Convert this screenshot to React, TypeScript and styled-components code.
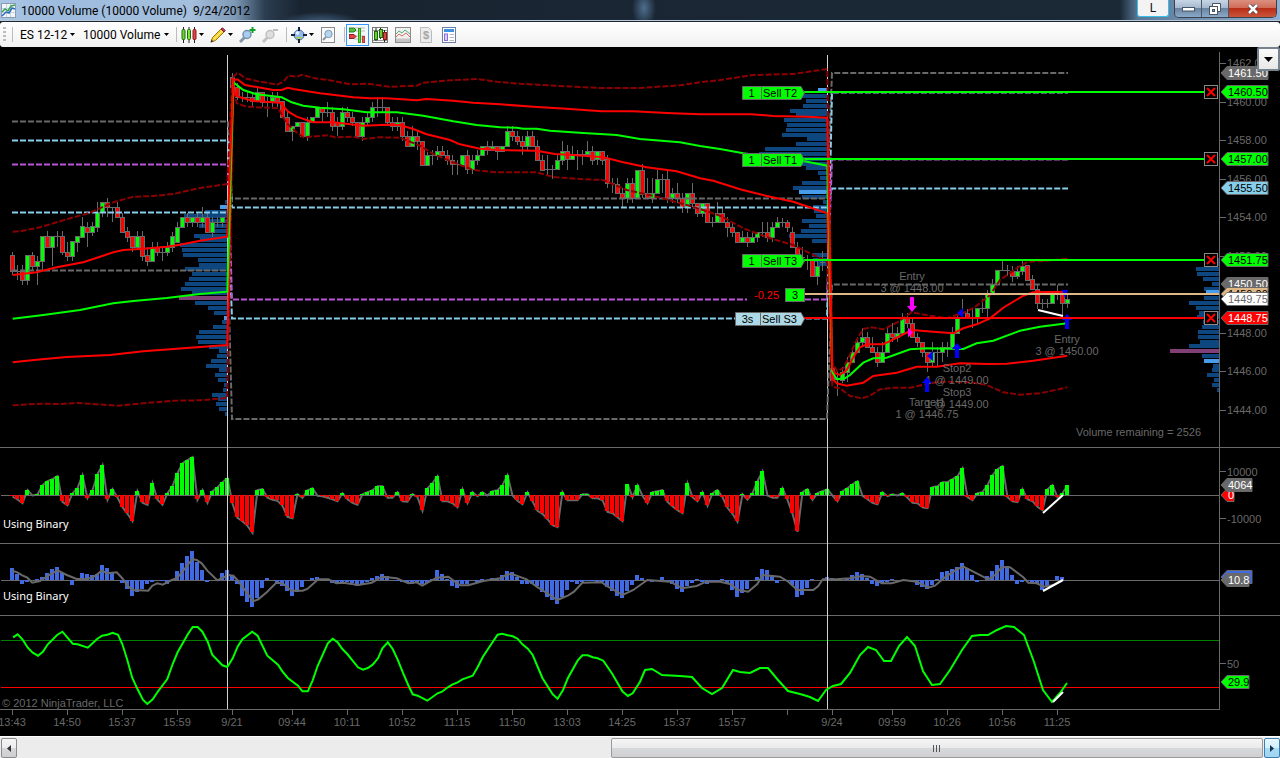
import React from "react";
import styled, { createGlobalStyle } from "styled-components";

const GlobalStyle = createGlobalStyle`
  html, body, #root { margin: 0; padding: 0; }
  body { background: #000; overflow-x: hidden; }
  * { box-sizing: border-box; }
`;

const uiFont = `Roboto, "Noto Sans", sans-serif`;
const captionFont = `"Noto Sans", "Open Sans", sans-serif`;
const chartFont = `"Liberation Sans", Arial, sans-serif`;

const gray = "#696969";
const lime = "#00ff00";
const red = "#ff0000";
const sky = "#87ceeb";
const orchid = "#ba55d3";
const tan = "#deb887";
const darkRed = "#8b0000";
const royal = "#4169e1";

/* ---------- window frame ---------- */

const Window = styled.div`
  display: flex;
  flex-direction: column;
  min-height: 100vh;
  background: #000;
`;

const TitleBar = styled.header`
  display: flex;
  align-items: flex-start;
  height: 22px;
  padding-left: 1px;
  border-bottom: 1px solid #1d2733;
  box-shadow: inset 0 -1px 0 #b9c7d6;
  background:
    radial-gradient(ellipse 12px 20px at 644px 8px, #4d6d8c 0%, transparent 100%),
    radial-gradient(ellipse 40px 10px at 320px 22px, #40607e 0%, transparent 100%),
    linear-gradient(90deg, #a9c6e6 0, #9dbbdd 60px, #a4c0de 190px, #7d99b6 235px, #2b3d50 265px, transparent 300px),
    linear-gradient(90deg, #18222e 0, #1b2937 1120px, #5a7896 1138px, #8fb0d2 100%);
`;

const TitleIcon = styled.svg`
  margin-top: 3px;
  flex: none;
`;

const Title = styled.h1`
  flex: 1;
  margin: 0 0 0 5px;
  font: 400 12px/22px ${uiFont};
  color: #000;
  white-space: pre;
`;

const LinkButton = styled.button`
  width: 32px;
  height: 17px;
  margin-right: 5px;
  padding: 0;
  border: 1px solid #35bfe8;
  border-top: 0;
  border-radius: 0 0 3px 3px;
  background: #f3f3f3;
  color: #111;
  font: 400 12px/16px ${uiFont};
`;

const CaptionGroup = styled.div`
  display: flex;
  height: 18px;
  margin-right: 3px;
  border: 1px solid #39424e;
  border-top: 0;
  border-radius: 0 0 5px 5px;
  overflow: hidden;
`;

const CaptionButton = styled.button<{ $wide?: boolean; $danger?: boolean }>`
  display: flex;
  align-items: center;
  justify-content: center;
  width: ${(p) => (p.$wide ? 47 : 27)}px;
  padding: 0;
  border: 0;
  border-right: ${(p) => (p.$danger ? "0" : "1px solid #4c5866")};
  background: ${(p) =>
    p.$danger
      ? "linear-gradient(#dc9080 0, #cf6c58 45%, #ba2e18 50%, #c9553a 100%)"
      : "linear-gradient(#c8d6e6 0, #a5b9d0 45%, #6a84a3 50%, #8aa9c8 100%)"};
`;

/* ---------- toolbar ---------- */

const Toolbar = styled.div`
  display: flex;
  align-items: center;
  height: 25px;
  padding-left: 3px;
  border-radius: 3px;
  background: linear-gradient(#fff, #f1f1f1);
`;

const Grip = styled.span`
  width: 3px;
  height: 15px;
  margin-right: 2px;
  background: repeating-linear-gradient(#bdbdbd 0 2px, transparent 2px 4px);
`;

const Separator = styled.span`
  width: 1px;
  height: 15px;
  margin: 0 1px 0 4px;
  background: #bcbcbc;
`;

const Pickers = styled.div`
  display: flex;
  gap: 8px;
  padding: 0 3px 0 6px;
`;

const PickerLabel = styled.label<{ $width: number }>`
  display: flex;
  align-items: center;
  width: ${(p) => p.$width}px;
`;

const Picker = styled.select`
  flex: 1;
  min-width: 0;
  height: 20px;
  padding: 0;
  border: 0;
  appearance: none;
  background: transparent;
  color: #000;
  font: 400 12px/20px ${uiFont};
`;

const ToolButton = styled.button<{ $menu?: boolean; $active?: boolean }>`
  display: flex;
  align-items: center;
  justify-content: space-between;
  flex: none;
  width: ${(p) => (p.$menu ? 29 : 23)}px;
  height: 22px;
  border: ${(p) => (p.$active ? "1px solid #3399ff" : "0")};
  padding: 0 ${(p) => (p.$active ? 2 : 3)}px;
  background: ${(p) => (p.$active ? "#f3f9ff" : "transparent")};
`;

/* ---------- chart ---------- */

const ChartArea = styled.main`
  position: relative;
  flex: 1;
  background: #000;
`;

const Pane = styled.svg`
  display: block;
  width: 100%;
  height: auto;
  font-family: ${chartFont};
  font-size: 11px;
`;

const ChartMenuButton = styled.button`
  position: absolute;
  top: 0;
  right: 0;
  display: flex;
  align-items: center;
  justify-content: center;
  width: 23px;
  height: 24px;
  padding: 0;
  border: 2px solid #77828f;
  border-radius: 2px;
  background: linear-gradient(#fafafa, #e8e8e8);
`;

const CancelButton = styled.button`
  display: block;
  width: 14px;
  height: 14px;
  padding: 0;
  border: 1px solid #8a8a8a;
  background: #000;
  svg { display: block; }
`;

/* ---------- scroll bar ---------- */

const ScrollBar = styled.footer`
  display: flex;
  height: 22px;
  padding: 1px 0 0 1px;
  border-top: 1px solid #fff;
  background: #ececec;
`;

const ScrollButton = styled.button<{ $hot?: boolean }>`
  flex: none;
  display: flex;
  align-items: center;
  justify-content: center;
  width: 16px;
  height: 20px;
  padding: 0;
  border: 1px solid ${(p) => (p.$hot ? "#3c7fb1" : "#8c8c8c")};
  border-radius: 2px;
  background: ${(p) =>
    p.$hot
      ? "linear-gradient(#e8f6fd 0, #d3effc 48%, #a9dbf5 52%, #a0d4ef 100%)"
      : "linear-gradient(#f6f6f6 0, #ededed 48%, #d6d7d9 52%, #cfcfd2 100%)"};
`;

const ScrollTrack = styled.div`
  flex: 1;
  display: flex;
  justify-content: flex-end;
`;

const ScrollThumb = styled.div`
  display: flex;
  align-items: center;
  justify-content: center;
  width: 52.3%;
  height: 20px;
  margin-right: 1px;
  border: 1px solid #9a9a9a;
  border-radius: 2px;
  background: linear-gradient(#f5f5f5 0, #ebebeb 48%, #d7d8da 52%, #d0d0d3 100%);
`;

/* ---------- series data: vertical values in thirds of a pixel ---------- */

type Candle = { i: number; dir: string; top: number; bottom: number; high: number; low: number };
type Point = [number, number];

const parseCandles = (start: number, originY: number, text: string): Candle[] =>
  text.split("|").map((row, n) => {
    const [dir, ...rest] = row.trim().split(" ");
    const [top, bottom, high, low] = rest.map((v) => originY + Math.round(Number(v) / 3));
    return { i: start + n, dir, top, bottom, high, low };
  });

const candles: Candle[] = [
  ...parseCandles(0, 100, "R 465 512 455 525|D 512 512 495 540|R 512 540 495 555|G 465 540 465 555|R 465 497 455 512|G 482 497 468 555|G 408 482 408 512|R 408 440 393 440|G 408 440 408 497|D 408 408 393 440|R 408 455 393 465|R 455 467 425 482|G 423 467 423 482|G 408 425 408 455|G 378 410 350 410|R 380 395 365 440|G 378 395 365 408|G 337 380 307 395|G 307 337 307 352|R 307 322 293 352|D 322 322 322 367|R 322 352 307 352|R 352 395 338 395|R 393 410 380 425|R 408 440 408 455|G 408 440 393 440|R 408 467 393 482|R 465 482 440 497|G 440 482 425 482|R 440 455 425 467|D 455 455 440 482|G 440 455 425 467|G 408 440 395 455|G 380 425 365 425|G 352 380 352 380|R 352 367 338 380|G 352 367 352 380|R 352 367 340 380|G 352 367 322 382|R 352 395 340 395|G 367 395 352 410|D 367 367 352 382|G 352 367 352 382"),
  ...parseCandles(44, 55, "R 67 97 55 100|R 97 127 85 135|D 125 125 110 140|D 125 125 110 140|R 127 138 112 155|G 112 138 98 138|R 112 140 112 155|D 140 140 125 185|G 125 138 112 155|R 125 138 112 155|R 138 185 138 185|R 185 227 170 227|G 212 227 212 258|G 200 212 200 212|R 200 243 200 243|G 200 243 185 258|G 185 200 185 200|G 155 185 155 185|R 155 170 155 200|D 170 170 140 185|R 170 212 155 227|R 200 212 185 243|G 170 212 155 225|R 170 185 155 200|R 185 200 170 212|R 200 243 200 243|G 200 243 185 258|G 185 200 170 212|G 155 185 140 200|D 155 155 127 185|D 155 155 127 170|R 155 200 155 212|R 200 212 185 227|G 200 212 185 227|R 200 243 185 258|R 243 272 227 272|G 243 272 212 272|R 243 257 227 285|R 257 329 257 329|G 300 329 290 329|D 300 300 285 330|G 287 300 272 315|R 287 300 272 300|R 300 315 285 330|R 315 327 300 360|D 327 327 315 360|G 300 329 300 329|R 300 343 285 358|G 315 343 300 358|G 300 315 285 330|G 272 300 272 300|R 272 285 257 300|G 272 285 257 285|R 272 287 272 315|G 272 287 272 287|G 227 272 212 272|R 227 243 212 257|R 243 257 227 270"),
  ...parseCandles(102, 100, "R 122 137 107 165|G 107 137 92 150|R 107 137 92 137|R 137 180 120 180|R 180 210 165 210|D 208 208 165 225|D 208 208 195 237|G 180 208 165 208|G 152 180 122 195|R 152 178 135 210|G 165 178 137 180|D 163 163 150 210|D 163 163 150 195|G 152 163 122 163|R 152 180 137 195|G 152 178 152 195|R 152 180 152 195|R 178 250 165 265|D 250 250 235 280|R 252 280 235 280|R 280 295 265 322|G 250 295 235 308|R 250 293 235 308|G 210 293 210 293|R 210 282 193 295|R 280 293 235 293|G 280 293 235 308|G 237 280 210 280|D 237 237 222 280|R 237 295 208 308|G 280 293 265 308|R 280 293 250 308|R 293 322 280 338|G 280 322 280 338|R 280 308 250 322|R 308 338 308 352|G 308 338 308 352|R 308 367 308 367|D 367 367 350 380|G 338 367 307 367|R 338 367 322 367|R 367 380 350 410|R 380 395 367 410|R 395 425 395 425|G 410 425 393 425|R 410 425 395 440|G 410 425 395 425|G 395 410 395 425"),
  ...parseCandles(150, 60, "D 515 515 485 530|R 515 530 485 545|G 500 530 485 545|G 487 500 472 500|D 487 487 475 500|R 487 500 480 515|R 515 560 500 560|R 560 590 545 590|D 590 590 560 600|D 598 598 585 630|R 600 647 600 647|G 617 647 600 675|D 605 605 572 632"),
  ...parseCandles(164, 240, "R 385 420 360 420|D 418 418 395 468|G 395 420 380 430|G 365 395 350 425|G 337 365 322 370|G 307 337 292 337|G 292 307 265 320|R 292 322 275 322|R 322 337 292 337|R 337 365 322 380|G 337 365 307 365|G 278 337 265 337|R 278 292 250 307|G 278 292 262 307|G 235 278 220 278|R 235 250 220 265|R 250 292 237 292|R 292 307 280 322|R 307 337 307 350|R 337 365 337 395|G 337 365 307 378|D 337 337 320 380|G 322 337 307 365|D 322 322 307 350|G 278 322 262 322|G 235 278 222 278|D 235 235 178 235|R 220 235 207 235|D 235 235 205 265|G 205 235 205 250|D 205 205 178 220|G 163 205 150 235|G 132 163 117 163|G 90 132 90 132|D 90 90 62 92|D 90 90 75 107|R 92 107 77 125|G 92 107 77 117|G 77 92 62 105|R 75 120 75 120|R 118 148 105 148|R 148 190 135 207|D 190 190 178 207|D 190 190 178 205|G 163 190 163 190|D 163 163 135 180|R 163 190 150 225|G 178 190 165 205"),
];

const deltaValues = [-3,-12,-23,16,0,3,31,43,49,58,-19,-29,7,22,61,-8,16,64,91,-13,19,-6,-35,-55,-77,13,-22,-28,37,-13,-28,7,28,67,97,106,115,-13,16,-22,13,25,40,52,-25,-67,-77,-91,-112,16,19,-7,-13,-16,-31,-64,-68,4,-7,16,22,-1,-2,-7,-11,-17,7,-11,-22,-28,4,10,16,28,28,-7,-7,10,-17,-19,4,-5,-46,22,37,58,-17,-17,-23,-35,19,-23,10,-2,10,0,13,16,31,61,0,-16,-26,10,-17,-46,-55,-71,-89,-95,10,-14,-14,-14,4,4,-8,-8,-14,-49,-53,-65,-77,34,-5,31,-1,-23,10,13,16,-19,-32,-44,-53,37,-5,-17,10,-31,7,16,-5,-37,-55,-79,4,-13,7,43,73,0,-7,-7,22,-13,-55,-109,10,19,-13,7,13,19,0,-17,13,22,34,43,-1,-11,-22,-26,10,-2,4,0,7,-7,-22,-23,-35,-38,25,28,40,40,49,58,82,-5,-14,7,10,31,61,79,88,-5,-17,-20,19,-11,-17,-34,-44,19,31,-5,7,31];

const momentumValues = [37,19,-11,-5,-1,3,10,22,34,40,22,0,-14,-1,22,19,16,19,46,37,22,-1,-8,-26,-47,-35,-26,-11,-5,-1,-2,-11,1,28,52,73,88,55,31,-5,0,0,22,31,16,-11,-47,-65,-80,-53,-23,7,0,-11,-17,-32,-47,-37,-20,0,7,10,2,-1,-8,-11,-5,-5,-8,-17,-11,-5,7,13,19,13,0,-2,-5,-8,-11,-8,-11,-10,3,31,19,3,-17,-23,-11,-11,0,-5,4,-1,7,7,16,28,25,10,-11,-11,-11,-17,-35,-50,-59,-71,-50,-29,-5,-11,-5,-2,-2,-5,-5,-20,-32,-47,-53,-32,-14,16,7,0,-5,0,10,-2,-11,-26,-35,-17,-8,4,-5,-11,-5,-2,4,-11,-29,-50,-38,-26,0,10,34,31,16,-8,0,-2,-14,-50,-44,-23,4,0,1,10,7,0,-1,4,16,25,19,7,-11,-17,-8,-5,4,0,1,-2,-5,-14,-20,-26,-14,4,25,28,34,40,52,37,16,-5,0,13,28,46,61,43,16,-11,-5,-2,-5,-11,-29,-17,0,13,10];

const parsePoints = (x0: number, y0: number, text: string, sx = 3): Point[] =>
  text.split(" ").map((pair) => {
    const [x, y] = pair.split(",").map(Number);
    return [x0 + x / sx, y0 + y / 3];
  });

const toPath = (points: Point[]) =>
  points.map(([x, y], n) => `${n ? "L" : "M"}${x.toFixed(1)} ${y.toFixed(1)}`).join("");

const upperBand = toPath([
  ...parsePoints(0, 100, "38,395 60,394 120,382 190,361 270,338 340,307 400,290 460,288 520,282 600,264 682,252"),
  ...parsePoints(220, 55, "37,70 50,55 60,58 75,70 110,78 172,89 190,80 205,62 232,65 245,59 285,70 330,76 390,88 440,86 510,95 590,92 610,83 690,76 770,72 830,80 900,86"),
  ...parsePoints(0, 0, "1680,258 1800,264 1920,264 2040,256"),
  ...parsePoints(700, 60, "0,67 60,60 160,45 280,42 382,27"),
  ...parsePoints(820, 240, "37,370 52,393 70,385 85,355 110,300 130,267 155,262 190,268 230,248 275,217 330,227 380,235 410,225 440,215 470,197 510,165 540,120 600,78 625,65 680,62 742,56"),
]);
const upperLine = toPath([
  ...parsePoints(0, 100, "38,525 110,517 170,502 250,487 300,470 340,457 370,450 430,446 500,440 540,434 600,422 682,410"),
  ...parsePoints(220, 55, "40,75 52,73 75,90 160,105 185,105 203,98 220,102 300,115 400,127 450,130 500,130 590,136 620,132 700,137 760,143 840,148"),
  ...parsePoints(500, 100, "0,13 100,20 200,26 305,34 400,34 500,39 600,43"),
  ...parsePoints(700, 60, "0,163 155,163 220,168 320,170 382,173"),
  ...parsePoints(820, 240, "37,385 45,400 60,405 80,390 100,352 120,322 140,313 190,313 210,303 275,270 340,275 400,280 430,265 470,253 510,235 550,203 610,167 640,157 742,155"),
]);
const middleLine = toPath([
  ...parsePoints(0, 100, "38,656 130,645 240,630 340,610 400,603 500,594 600,582 682,575"),
  ...parsePoints(220, 55, "40,82 70,105 110,118 185,127 215,142 250,152 300,158 370,163 440,172 530,172 610,182 700,199 770,210"),
  ...parsePoints(500, 100, "0,82 50,83 70,86 110,86 150,92 250,99 350,105 420,117 540,127"),
  ...parsePoints(700, 60, "0,258 60,267 130,280 310,303 382,317"),
  ...parsePoints(820, 240, "37,395 50,418 75,415 90,405 130,368 160,355 200,353 270,328 320,325 430,327 470,310 520,302 600,272 660,260 742,250"),
]);
const lowerLine = toPath([
  ...parsePoints(0, 100, "38,787 110,779 200,771 330,765 430,754 550,745 682,735"),
  ...parsePoints(220, 55, "40,80 45,118 60,127 100,138 180,143 205,170 230,185 280,202 340,202 430,212 500,209 540,210 580,222 620,238 690,255 720,268 780,281"),
  ...parsePoints(500, 100, "0,150 110,152 165,162 230,166 310,172 370,187 440,202 530,214"),
  ...parsePoints(700, 60, "0,355 40,362 120,388 200,408 280,425 382,460"),
  ...parsePoints(820, 240, "37,415 50,430 80,437 130,428 160,408 230,398 290,380 350,380 420,370 500,372 560,371 640,362 742,347"),
]);
const lowerBand = toPath([
  ...parsePoints(0, 100, "38,916 120,911 180,912 230,909 280,912 350,917 430,910 520,902 600,901 682,894"),
  ...parsePoints(220, 55, "40,100 50,145 80,155 175,160 200,205 225,228 250,247 320,241 345,247 400,245 430,252 480,247 540,248 600,272 640,297 700,322 760,345 830,352"),
  ...parsePoints(500, 100, "0,217 110,217 160,231 250,238 310,240 380,270 470,290 560,315"),
  ...parsePoints(700, 60, "0,447 60,467 130,505 210,535 280,555 330,580 382,605"),
  ...parsePoints(820, 240, "37,440 60,445 90,468 125,475 150,467 180,448 220,443 270,443 330,430 360,425 450,427 500,435 550,457 600,464 660,460 742,442"),
]);

const momentumAverage = toPath([
  ...parsePoints(0, 440, "37,392 52,397 67,406 82,413 97,428 120,423 145,407 173,391 200,405 230,417 265,416 285,408 305,392 322,400 350,397 368,416 385,440 400,450 445,452 457,437 472,430 488,434 515,420 530,415 550,392 577,357 590,360 605,370 622,392 652,421 685,405 700,407 712,420 727,440 760,484 775,478 800,457 830,427 850,432 875,452 908,452 922,447 955,418 985,418 1010,430 1030,428 1075,435 1115,428 1147,410 1190,415 1225,430 1250,427"),
  ...parsePoints(420, 440, "7,437 50,413 85,410 120,436 145,436 190,423 240,415 262,403 278,403 320,418 350,440 385,462 412,480 445,466 462,455 487,428 545,427 560,438 608,465 640,450 682,420 750,425 787,445 830,438 858,425 900,425 930,432 955,450 985,455 1012,432 1028,405 1080,410 1105,425 1132,450 1180,450 1195,438 1208,418"),
  ...parsePoints(820, 440, "50,418 90,415 125,408 150,410 185,430 215,430 250,420 290,425 325,443 345,437 375,412 410,388 430,380 460,395 505,418 525,405 545,382 570,382 610,412 625,428 650,430 672,440 700,435 726,420"),
]);

const stochastic = toPath([
  ...parsePoints(0, 610, "32,82 43,73 55,88 68,113 80,128 93,137 105,125 117,103 140,75 153,65 178,101 190,103 215,113 238,87 250,77 263,74 276,68 289,74 300,103 312,150 324,203 337,238 350,269 361,282 374,268 386,246 410,207 423,162 435,127 460,73 472,51 484,51 496,65 509,96 520,134 545,166 557,171 570,145 582,110 594,88 618,65 631,77 655,137 668,151 681,164 692,184 705,204 730,227 741,244 754,244 766,211 778,168 803,100 815,86 827,97 839,117 851,132 877,172 889,179 901,174 913,164 926,145 937,115 950,97 962,117 975,151 987,188 1000,225 1011,253 1023,257 1047,272 1072,250 1083,245 1097,232 1108,224 1121,217 1133,208 1158,197 1170,172 1183,140 1207,96 1219,74 1230,71 1244,76 1256,79 1268,86 1280,103 1293,116 1305,135 1329,204 1354,253 1366,266 1379,241 1391,205 1415,152 1427,136 1440,136 1452,142 1464,145 1478,152 1500,191 1525,244 1538,258 1550,250 1568,215", 2.45),
  [645, 670], [652, 669], [662, 675], [680, 676], [692, 677], [702, 688], [712, 694], [722, 688], [733, 670], [740, 672], [750, 673], [760, 668], [768, 668], [778, 680], [788, 691], [800, 694], [810, 697], [818, 701], [826, 690], [833, 686], [841, 684], [850, 673], [860, 655], [868, 647], [876, 650], [884, 661], [891, 661], [899, 646], [907, 637], [915, 646], [923, 671], [932, 685], [940, 684], [950, 670], [962, 650], [972, 636], [980, 635], [988, 635], [997, 630], [1006, 626], [1014, 627], [1024, 635], [1034, 662], [1043, 690], [1052, 702], [1060, 693], [1067, 683],
]);

/* Volume by price: left edge and centre, in thirds of a pixel; b = value area edge, p = point of control. */
const parseProfile = (x0: number, y0: number, right: number, text: string) =>
  text.split(" ").map((item) => {
    const kind = item.endsWith("b") ? "#4fabff" : item.endsWith("p") ? "#8b4582" : "#104e8b";
    const [left, y] = item.replace(/[bp]/, "").split(",").map(Number);
    return { x: x0 + Math.round(left / 3), width: Math.round((right - left) / 3), y: y0 + Math.round(y / 3) - 2, fill: kind };
  });

const profile = [
  ...parseProfile(0, 100, 684, "675,306 660,321b 615,336 552,347 570,362 597,378 622,392 582,408 600,421 540,436 546,450 549,465 594,480 597,494 555,507 576,522 567,537 555,552 543,566 576,580 537,595p 585,609 624,624 642,639 672,653b 666,666 639,681 597,696 588,711 594,725 627,740 657,754 651,768 633,783 618,797 657,811 645,825 654,840 672,855 669,870 636,884 654,897 648,912 657,927 675,942"),
  ...parseProfile(700, 60, 384, "354,91b 300,108 318,123 309,138 270,152 288,163 252,180 261,195 258,209 246,224 321,237 288,252 195,267 177,282 200,297 306,312 318,325 354,339 360,354 306,369 279,383 297,396b 306,411 369,426 339,440 342,454 348,468 306,483 327,498 303,513 267,528 336,542 336,585 340,600 355,613"),
  ...parseProfile(1080, 60, 417, "412,600 408,612 348,627 351,642 369,657 396,672 372,686 378,697b 372,714 327,729 348,744 357,759 350,772 369,787 366,801 354,816 354,831 360,845 327,858 270,873p 366,888 372,903b 399,917 396,930 381,945 402,960 396,975 411,990"),
];

const pivotLines = [
  { color: gray, d: "M12 121.500H228L232 198.500H827L832 73H1068" },
  { color: gray, d: "M12 270.500H228L232 419H827L832 284.500H1068" },
  { color: sky, d: "M12 140.500H228L232 207.500H827L832 188.500H1068" },
  { color: sky, d: "M12 212.500H228L232 318.500H827L832 92.500H1068" },
  { color: orchid, d: "M12 164.500H228L232 299.500H747M805 299.500H827L832 159.500H1068" },
];

const orders = [
  { y: 92, qty: "1", name: "Sell T2", fill: lime, left: 742, split: 761 },
  { y: 159, qty: "1", name: "Sell T1", fill: lime, left: 742, split: 761 },
  { y: 260, qty: "1", name: "Sell T3", fill: lime, left: 742, split: 761 },
  { y: 318, qty: "3s", name: "Sell S3", fill: "#add8e6", left: 735, split: 760, line: red },
];

const priceTicks = [1462, 1460, 1458, 1456, 1454, 1452, 1448, 1446, 1444];
const priceY = (price: number) => Math.round(101.5 + (1460 - price) * 19.25);

const timeTicks: [number, string][] = [
  [12, "13:43"], [67, "14:50"], [122, "15:37"], [177, "15:59"], [232, "9/21"], [292, "09:44"], [347, "10:11"],
  [402, "10:52"], [457, "11:15"], [512, "11:50"], [567, "13:03"], [622, "14:25"], [677, "15:37"], [732, "15:57"],
  [787, ""], [832, "9/24"], [892, "09:59"], [947, "10:26"], [1002, "10:56"], [1057, "11:25"],
];

/* ---------- chart parts ---------- */

const AxisTag = ({ y, text, fill, color = "#fff", width = 41 }: { y: number; text: string; fill: string; color?: string; width?: number }) => (
  <g>
    <path d={`M1221 ${y}L1227 ${y - 6.5}H${1227 + width}V${y + 6.5}H1227Z`} fill={fill} stroke={gray} />
    <text x="1228" y={y + 4} fill={color}>{text}</text>
  </g>
);

const Histogram = ({ values, baseline, up, down }: { values: number[]; baseline: number; up: string; down: string }) => (
  <g shapeRendering="crispEdges">
    {values.map((v, i) => {
      const h = Math.round(Math.abs(v) / 3);
      return h ? <rect key={i} x={10 + i * 5} y={v > 0 ? baseline - h : baseline} width="4" height={h} fill={v > 0 ? up : down} /> : null;
    })}
  </g>
);

const SessionLines = ({ from, to }: { from: number; to: number }) => (
  <path d={`M227.500 ${from}V${to}M827.500 ${from}V${to}`} stroke="#d3d3d3" />
);

const Arrow = ({ x, y, up, color }: { x: number; y: number; up?: boolean; color: string }) => (
  <path d={up ? `M${x} ${y}l5 6h-3v9h-4v-9h-3z` : `M${x} ${y}l5 -6h-3v-9h-4v9h-3z`} fill={color} />
);

const Note = ({ x, y, lines }: { x: number; y: number; lines: string[] }) => (
  <g fill={gray} textAnchor="middle">
    {lines.map((line, n) => <text key={n} x={x} y={y + n * 12}>{line}</text>)}
  </g>
);

const PricePane = () => (
  <Pane viewBox="0 47 1280 400">
    <g shapeRendering="crispEdges" opacity="0.92">
      {profile.map((bar, n) => <rect key={n} x={bar.x} y={bar.y} width={bar.width} height="4" fill={bar.fill} />)}
    </g>
    <g stroke={gray} shapeRendering="crispEdges">
      {candles.map((c) => {
        const x = 12.5 + c.i * 5;
        return (
          <g key={c.i}>
            <path d={`M${x} ${c.high}V${c.low}`} />
            {c.dir === "D"
              ? <path d={`M${x - 2.5} ${c.top + 0.5}H${x + 2.5}`} />
              : <rect x={x - 2} y={c.top + 0.5} width="4" height={Math.max(2, c.bottom - c.top)} fill={c.dir === "G" ? lime : red} />}
          </g>
        );
      })}
    </g>
    <SessionLines from={55} to={447} />
    <g fill="none" strokeWidth="2">
      {pivotLines.map((line, n) => <path key={n} d={line.d} stroke={line.color} strokeDasharray="6 2" />)}
      <path d={upperBand} stroke={darkRed} strokeDasharray="6 2" />
      <path d={lowerBand} stroke={darkRed} strokeDasharray="6 2" />
      <path d={lowerLine} stroke={red} />
      <path d={middleLine} stroke={lime} />
      <path d={upperLine} stroke={red} />
      <path d="M1038 310L1063 316" stroke="#fff" />
    </g>

    <Note x={912} y={280} lines={["Entry", "3 @ 1448.00"]} />
    <Note x={957} y={372} lines={["Stop2", "1 @ 1449.00", "Stop3", "1 @ 1449.00"]} />
    <Note x={927} y={406} lines={["Target1", "1 @ 1446.75"]} />
    <Note x={1067} y={343} lines={["Entry", "3 @ 1450.00"]} />
    <Arrow x={912} y={312} color="#ff00ff" />
    <Arrow x={927} y={377} up color="#0000ff" />
    <Arrow x={957} y={343} up color="#0000ff" />
    <Arrow x={1067} y={314} up color="#0000ff" />
    <path d="M908 327.500l5 5l-5 5z" fill="#ff00ff" />
    <path d="M933 351l-6 5l6 5zM963 308l-6 5l6 5zM1062 290h6l-3 8z" fill="#0000ff" />

    <g strokeWidth="2">
      <path d="M804 294H1219" stroke={tan} />
      {orders.map((o) => <path key={o.name} d={`M804 ${o.y}H1205`} stroke={o.line ?? lime} />)}
    </g>
    {orders.map((o) => (
      <g key={o.name}>
        <path d={`M${o.left + 0.5} ${o.y - 5.5}H801L804.500 ${o.y + 1}L801 ${o.y + 7.5}H${o.left + 0.5}Z`} fill={o.fill} stroke={gray} />
        <path d={`M${o.split + 0.5} ${o.y - 5}V${o.y + 7}`} stroke={gray} />
        <text x={(o.left + o.split) / 2} y={o.y + 5} textAnchor="middle">{o.qty}</text>
        <text x={o.split + 2} y={o.y + 5}>{o.name}</text>
        <foreignObject x="1204" y={o.y - 7} width="14" height="14">
          <CancelButton aria-label={`Cancel ${o.name}`}>
            <svg width="12" height="12" viewBox="0 0 12 12"><path d="M2 2L10 10M10 2L2 10" stroke={red} strokeWidth="2" /></svg>
          </CancelButton>
        </foreignObject>
      </g>
    ))}
    <text x="754" y="299" fill={red}>-0.25</text>
    <rect x="785.5" y="288.500" width="19" height="13" fill={lime} stroke={gray} />
    <text x="795" y="299" textAnchor="middle">3</text>
    <text x="1201" y="436" fill={gray} textAnchor="end">Volume remaining = 2526</text>

    <path d="M1219.500 52V447" stroke={gray} />
    {priceTicks.map((p) => (
      <g key={p}>
        <path d={`M1220 ${priceY(p) + 0.5}H1226`} stroke={gray} />
        <text x="1227" y={priceY(p) + 4} fill={gray}>{p}.00</text>
      </g>
    ))}
    <AxisTag y={73} text="1461.50" fill={gray} />
    <AxisTag y={92} text="1460.50" fill={lime} color="#000" />
    <AxisTag y={159} text="1457.00" fill={lime} color="#000" />
    <AxisTag y={188} text="1455.50" fill={sky} color="#000" />
    <AxisTag y={260} text="1451.75" fill={lime} color="#000" />
    <AxisTag y={284} text="1450.50" fill={gray} />
    <AxisTag y={294} text="1450.00" fill={tan} color="#000" />
    <AxisTag y={299} text="1449.75" fill="#fff" color={gray} />
    <AxisTag y={318} text="1448.75" fill={red} />
  </Pane>
);

const DeltaPane = () => (
  <Pane viewBox="0 447 1280 96">
    <path d="M0 447.500H1280M1219.500 447V543" stroke={gray} />
    <path d="M1 495.500H1219M1220 471.500H1226M1220 518.500H1226" stroke={gray} />
    <path d={toPath(deltaValues.map((v, i): Point => [12.5 + i * 5, 495.5 - v / 3]))} fill="none" stroke={gray} strokeWidth="2" />
    <Histogram values={deltaValues} baseline={495} up={lime} down={red} />
    <SessionLines from={447} to={543} />
    <path d="M1043 513L1063 495" stroke="#fff" strokeWidth="2" />
    <text x="3" y="528" fill="#fff" fontFamily={captionFont}>Using Binary</text>
    <text x="1227" y="476" fill={gray}>10000</text>
    <text x="1227" y="523" fill={gray}>-10000</text>
    <AxisTag y={495} text="0" fill={red} width={7} />
    <AxisTag y={485} text="4064" fill={gray} width={25} />
  </Pane>
);

const MomentumPane = () => (
  <Pane viewBox="0 543 1280 72">
    <path d="M0 543.500H1280M1219.500 543V615M1 580.500H1219" stroke={gray} />
    <Histogram values={momentumValues} baseline={580} up={royal} down={royal} />
    <path d={momentumAverage} fill="none" stroke={gray} strokeWidth="2" />
    <SessionLines from={543} to={615} />
    <path d="M1043 591L1063 580" stroke="#fff" strokeWidth="2" />
    <text x="3" y="600" fill="#fff" fontFamily={captionFont}>Using Binary</text>
    <AxisTag y={577} text="" fill={royal} width={25} />
    <AxisTag y={580} text="10.8" fill={gray} width={22} />
  </Pane>
);

const StochasticPane = () => (
  <Pane viewBox="0 615 1280 121">
    <path d="M0 615.500H1280M1219.500 615V709M0 709.500H1220M1220 663.500H1226" stroke={gray} />
    <path d="M1 640.500H1219" stroke="#008000" />
    <path d="M1 687.500H1219" stroke={red} />
    <SessionLines from={615} to={709} />
    <path d={stochastic} fill="none" stroke={lime} strokeWidth="2" />
    <path d="M1053 702L1063 692" stroke="#fff" strokeWidth="2" />
    <text x="2" y="707" fill={gray}>© 2012 NinjaTrader, LLC</text>
    <text x="1227" y="668" fill={gray}>50</text>
    <AxisTag y={682} text="29.9" fill={lime} color="#000" width={22} />
    {timeTicks.map(([x, label]) => (
      <g key={x}>
        <path d={`M${x + 0.5} 710V715`} stroke={gray} />
        <text x={x} y="726" fill={gray} textAnchor="middle">{label}</text>
      </g>
    ))}
  </Pane>
);

/* ---------- icons ---------- */

const Caret = () => <svg width="5" height="3" viewBox="0 0 5 3"><path d="M0 0H5L2.500 3Z" fill="#000" /></svg>;

const CandlesIcon = () => (
  <svg width="16" height="16" viewBox="0 0 16 16">
    <path d="M2.500 0V16M8 0V16M13.500 0V16" stroke="#222" />
    <rect x="1" y="2.500" width="3" height="10" rx="1" fill="#69d62b" stroke="#206a10" />
    <rect x="6.500" y="2.500" width="3" height="10" rx="1" fill="#79e234" stroke="#206a10" />
    <rect x="12" y="2.500" width="3" height="10" rx="1" fill="#e24646" stroke="#8c1616" />
  </svg>
);

const PencilIcon = () => (
  <svg width="16" height="16" viewBox="0 0 16 16">
    <path d="M1 15L2.500 10.500L11 2L14 5L5.500 13.500Z" fill="#f8d22c" stroke="#9a7417" />
    <path d="M4 12L12.500 3.500" stroke="#fff3a0" />
    <path d="M11 2L12.500 .8L15.200 3.500L14 5Z" fill="#c0395a" stroke="#7e2034" />
    <path d="M.6 15.500L1.500 12.500L3.500 14.500Z" fill="#333" />
  </svg>
);

const ZoomIcon = ({ mode }: { mode: "in" | "out" }) => {
  const on = mode === "in";
  return (
    <svg width="17" height="16" viewBox="0 0 17 16">
      <path d="M1 15L5.500 10.500" stroke={on ? "#8796a6" : "#c2c2c2"} strokeWidth="3" />
      <circle cx="8" cy="7.500" r="4" fill={on ? "#a8cdf0" : "#dedede"} stroke={on ? "#7893ad" : "#c0c0c0"} strokeWidth="1.500" />
      {on ? <path d="M10.500 3H16.500M13.500 0V6" stroke="#12a12c" strokeWidth="2" /> : <path d="M11 3H16" stroke="#bdbdbd" strokeWidth="2" />}
    </svg>
  );
};

const CrosshairIcon = () => (
  <svg width="16" height="16" viewBox="0 0 16 16">
    <circle cx="8" cy="8" r="5" fill="#8fb9ec" stroke="#4c6d9c" />
    <path d="M4 10a5 5 0 0 0 8 0z" fill="#a7cf55" />
    <circle cx="6.500" cy="6" r="1.800" fill="#e8f3ff" />
    <path d="M8 0V4M8 12V16M0 8H4M12 8H16" stroke="#16223c" strokeWidth="2" />
  </svg>
);

const PageZoomIcon = () => (
  <svg width="16" height="16" viewBox="0 0 16 16">
    <rect x="1.500" y=".5" width="13" height="15" fill="#fbfbfb" stroke="#8b8b8b" />
    <path d="M3 13L6 10" stroke="#8d9399" strokeWidth="2" />
    <circle cx="8.500" cy="7" r="3.700" fill="#b5d4ee" stroke="#7d98b2" />
  </svg>
);

const TraderIcon = () => (
  <svg width="17" height="16" viewBox="0 0 17 16">
    <path d="M5 1H16M5 4H16M5 9H16M5 12H16" stroke="#b9b9b9" />
    <path d="M0 1H5L7 3L5 5H0Z" fill="#4fc33a" stroke="#267a1c" />
    <path d="M0 7.500H5L7 9.500L5 11.500H0Z" fill="#e04444" stroke="#8f1d1d" />
    <rect x="9.500" y="1.500" width="2" height="14" fill="#6fd636" stroke="#2d9a18" />
    <rect x="13.500" y="9.500" width="2" height="6" fill="#e05a5a" stroke="#b33b3b" />
  </svg>
);

const ChartBoxIcon = () => (
  <svg width="16" height="16" viewBox="0 0 16 16">
    <rect x=".5" y=".5" width="15" height="15" fill="#fafafa" stroke="#777" />
    <path d="M1 13.500H15M1 3.500H15" stroke="#999" />
    <path d="M4 1V14M8.500 1V12M12.500 3V15" stroke="#222" />
    <rect x="2.500" y="4.500" width="3" height="8" fill="#65cf30" stroke="#1f6511" />
    <rect x="7.500" y="2.500" width="3" height="8" fill="#65cf30" stroke="#1f6511" />
    <rect x="11.500" y="5.500" width="3" height="7" fill="#e14242" stroke="#8b1a1a" />
  </svg>
);

const IndicatorIcon = () => (
  <svg width="16" height="16" viewBox="0 0 16 16">
    <rect x=".5" y=".5" width="15" height="15" fill="#f0f0f0" stroke="#8b8b8b" />
    <path d="M1 11.500H15V15H1Z" fill="#c6c6c6" />
    <path d="M1 7L4 4L7 6L10 3L15 7" fill="none" stroke="#4db37c" />
    <path d="M1 10L4 7L7 9L11 6L15 10" fill="none" stroke="#e06a6a" />
  </svg>
);

const DollarIcon = () => (
  <svg width="16" height="16" viewBox="0 0 16 16">
    <path d="M2.500 .5H10.500L13.500 3.500V15.500H2.500Z" fill="#ececec" stroke="#bcbcbc" />
    <text x="8" y="12" textAnchor="middle" fontSize="11" fontWeight="700" fontFamily={chartFont} fill="#a5a5a5">$</text>
  </svg>
);

const PropertiesIcon = () => (
  <svg width="16" height="16" viewBox="0 0 16 16">
    <rect x="1.500" y=".5" width="13" height="15" fill="#fff" stroke="#6a7fa3" />
    <path d="M3 3.500H13" stroke="#3d92e0" strokeWidth="3" />
    <rect x="3.500" y="7" width="3" height="6.500" fill="#d9ccff" stroke="#8d6ae4" />
    <path d="M8.500 7.500H13M8.500 10.500H13M8.500 13.500H13" stroke="#b9b9b9" />
  </svg>
);

export default function App() {
  return (
    <Window>
      <GlobalStyle />
      <TitleBar>
        <TitleIcon width="15" height="15" viewBox="0 0 15 15">
          <rect x=".5" y=".5" width="14" height="14" fill="#f2f5fa" stroke="#8b9bb0" />
          <path d="M1 5.500H14M1 9.500H14M5.500 1V14M9.500 1V14" stroke="#c8d2e0" />
          <path d="M1 9L4 6L7 8L10 3L14 2" fill="none" stroke="#3aa24b" strokeWidth="1.500" />
          <path d="M1 13L5 9L8 10L11 5L14 6" fill="none" stroke="#2c6cc0" strokeWidth="1.500" />
        </TitleIcon>
        <Title>{"10000 Volume (10000 Volume)  9/24/2012"}</Title>
        <LinkButton>L</LinkButton>
        <CaptionGroup>
          <CaptionButton aria-label="Minimize">
            <svg width="13" height="6"><rect x=".5" y="1.500" width="12" height="3.500" fill="#fff" stroke="#4a5564" /></svg>
          </CaptionButton>
          <CaptionButton aria-label="Restore">
            <svg width="12" height="12" viewBox="0 0 12 12">
              <path d="M3.500 3V.5H11.500V8.500H9" fill="#fff" stroke="#4a5564" />
              <rect x=".5" y="3.500" width="8" height="8" fill="#fff" stroke="#4a5564" />
              <rect x="3.500" y="6.500" width="2" height="2" fill="#8298b0" stroke="#4a5564" />
            </svg>
          </CaptionButton>
          <CaptionButton $wide $danger aria-label="Close">
            <svg width="12" height="10" viewBox="0 0 12 10">
              <path d="M2 1L10 9M10 1L2 9" stroke="#4a3c46" strokeWidth="4" />
              <path d="M2 1L10 9M10 1L2 9" stroke="#fff" strokeWidth="2.500" />
            </svg>
          </CaptionButton>
        </CaptionGroup>
      </TitleBar>

      <Toolbar role="toolbar">
        <Grip />
        <Separator />
        <Pickers>
          <PickerLabel $width={55}>
            <Picker aria-label="Instrument"><option>ES 12-12</option></Picker>
            <Caret />
          </PickerLabel>
          <PickerLabel $width={86}>
            <Picker aria-label="Period"><option>10000 Volume</option></Picker>
            <Caret />
          </PickerLabel>
        </Pickers>
        <Separator />
        <ToolButton $menu aria-label="Chart style"><CandlesIcon /><Caret /></ToolButton>
        <ToolButton $menu aria-label="Drawing tools"><PencilIcon /><Caret /></ToolButton>
        <ToolButton aria-label="Zoom in"><ZoomIcon mode="in" /></ToolButton>
        <ToolButton aria-label="Zoom out"><ZoomIcon mode="out" /></ToolButton>
        <Separator />
        <ToolButton $menu aria-label="Crosshair"><CrosshairIcon /><Caret /></ToolButton>
        <ToolButton aria-label="Data box"><PageZoomIcon /></ToolButton>
        <Separator />
        <ToolButton $active aria-label="Chart trader"><TraderIcon /></ToolButton>
        <ToolButton aria-label="Data series"><ChartBoxIcon /></ToolButton>
        <ToolButton aria-label="Indicators"><IndicatorIcon /></ToolButton>
        <ToolButton aria-label="Strategies"><DollarIcon /></ToolButton>
        <ToolButton aria-label="Properties"><PropertiesIcon /></ToolButton>
      </Toolbar>

      <ChartArea>
        <PricePane />
        <DeltaPane />
        <MomentumPane />
        <StochasticPane />
        <ChartMenuButton aria-label="Chart menu">
          <svg width="9" height="5" viewBox="0 0 9 5"><path d="M0 0H9L4.500 5Z" fill="#000" /></svg>
        </ChartMenuButton>
      </ChartArea>

      <ScrollBar>
        <ScrollButton aria-label="Scroll left"><svg width="4" height="7"><path d="M4 0V7L0 3.500Z" fill="#333" /></svg></ScrollButton>
        <ScrollTrack>
          <ScrollThumb>
            <svg width="8" height="7"><path d="M.5 0V7M3.500 0V7M6.500 0V7" stroke="#555" /></svg>
          </ScrollThumb>
        </ScrollTrack>
        <ScrollButton $hot aria-label="Scroll right"><svg width="4" height="7"><path d="M0 0V7L4 3.500Z" fill="#14364e" /></svg></ScrollButton>
      </ScrollBar>
    </Window>
  );
}
